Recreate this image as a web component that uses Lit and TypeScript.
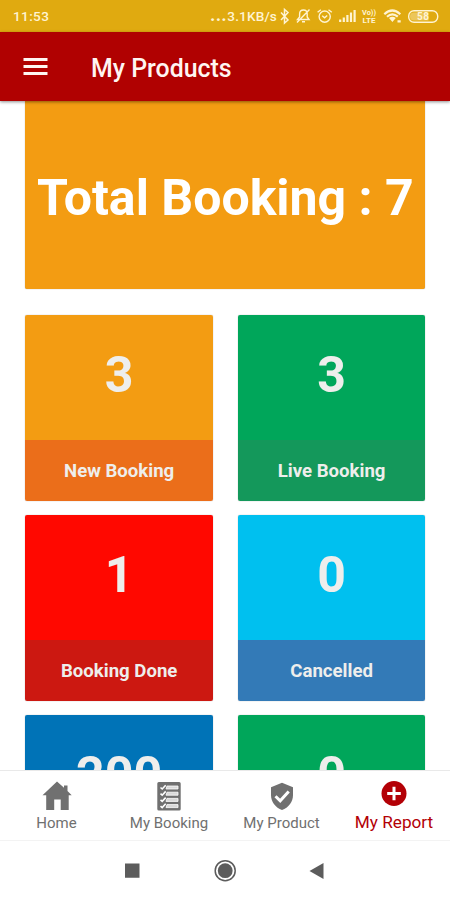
import { LitElement, html, css, svg } from "lit";
import { customElement, property } from "lit/decorators.js";
import { styleMap } from "lit/directives/style-map.js";

@customElement("status-bar")
class StatusBar extends LitElement {
  static styles = css`
    :host { display: flex; align-items: center; justify-content: space-between; box-sizing: border-box; height: 32px; padding: 0 11px 0 13px; background: #e0aa10; color: #fff4d2; font-size: 13.6px; font-weight: 500; line-height: 16px; }
    .time { letter-spacing: 0.35px; }
    .right { display: flex; align-items: center; }
    .rate { letter-spacing: 0.15px; white-space: nowrap; height: 16px; }
    .dots { letter-spacing: 0.8px; font-weight: 900; font-size: 16px; line-height: 1px; }
    svg { display: block; fill: none; stroke: currentColor; stroke-width: 1.4; }
    .net { font-size: 7px; font-weight: 700; stroke: none; fill: currentColor; }
    .level { font-size: 10px; font-weight: 700; stroke: none; fill: currentColor; }
  `;
  render() {
    return html`
      <span class="time">11:53</span>
      <div class="right">
        <span class="rate"><span class="dots">...</span>3.1KB/s</span>
        <svg width="162" height="20" viewBox="277 6 162 20">
          <path d="M281 12.500l7 7.500-3.500 3V9.500l3.500 3-7 7.500" stroke-width="1.500" />
          <path d="M297.500 19.500h11.500l-1.800-2.500v-3c0-2.600-1.500-4-3.700-4s-3.900 1.400-3.900 4v3zM302 21.700h3M309.500 9.500L297 22.500" />
          <circle cx="324.700" cy="16.600" r="5.600" /><path d="M322.200 15.800l2.400 2 2.600-2.300M317.600 12.300l3.300-2.600M331.800 12.300l-3.300-2.600" />
          <path d="M340.200 22v-2.500M343.800 22v-4.500M347.400 22v-7M351 22v-9.500M354.600 22v-12" stroke-width="2.200" />
          <text class="net" x="362" y="15.200" textLength="14" lengthAdjust="spacingAndGlyphs">Vo))</text>
          <text class="net" x="362.500" y="22.700" textLength="13" lengthAdjust="spacingAndGlyphs">LTE</text>
          <path d="M384.300 14.200Q392.300 6.800 400.300 14.200M387 16.700Q392.300 12 397.800 16.700" stroke-width="2.200" />
          <path d="M389 18.100Q392.300 15.400 395.800 18.100L392.400 22zM397.500 20.200h3.200v2.400h-3.200z" fill="currentColor" stroke="none" />
          <rect x="408.700" y="10.700" width="29" height="11.600" rx="5.400" />
          <path d="M414 12.500h14.500v8H414a4 4 0 010-8z" fill="currentColor" stroke="none" opacity=".38" />
          <text class="level" x="417" y="20" textLength="12">58</text>
        </svg>
      </div>
    `;
  }
}

@customElement("app-header")
class AppHeader extends LitElement {
  static styles = css`
    :host { display: flex; align-items: center; box-sizing: border-box; height: 69px; padding-left: 23px; background: #b00101; color: #fff5f2; box-shadow: 0 1px 3px rgba(0, 0, 0, 0.45); z-index: 2; }
    svg { display: block; fill: currentColor; }
    .title { margin: 5px 0 0 43px; font-size: 24.9px; font-weight: 500; line-height: 30px; white-space: nowrap; }
  `;
  render() {
    return html`
      <svg width="25" height="18" viewBox="0 0 25 18"><path d="M.5 0h24v3H.5zM.5 7h24v3H.5zM.5 14h24v3H.5z" /></svg>
      <div class="title">My Products</div>
    `;
  }
}

@customElement("count-card")
class CountCard extends LitElement {
  @property() count = "";
  @property() label = "";
  @property() top = "";
  @property() bottom = "";
  static styles = css`
    .card { height: 186.5px; border-radius: 2px; overflow: hidden; box-shadow: 0 0 1px rgba(0, 0, 0, 0.45); color: #eeeeec; font-weight: 700; text-align: center; }
    .count { height: 125px; line-height: 120px; font-size: 50px; box-sizing: border-box; }
    .label { height: 61.5px; line-height: 62px; font-size: 18.6px; }
  `;
  render() {
    return html`
      <div class="card">
        <div class="count" style=${styleMap({ background: this.top })}>${this.count}</div>
        <div class="label" style=${styleMap({ background: this.bottom })}>${this.label}</div>
      </div>
    `;
  }
}

const icons = {
  home: svg`<path d="M15 .500L.500 14.200h3.700V29h8V18.500h6.500V29h8V14.200h3L25.500 10V4.500H22v2.300z" />`,
  list: svg`<path d="M4.800 1h20.400a1.500 1.500 0 011.500 1.500v25.500a1.500 1.500 0 01-1.500 1.500H4.800a1.500 1.500 0 01-1.500-1.500V2.500A1.500 1.500 0 014.800 1z" /><path class="rows" d="M13 5h11v3H12zM13 11.200h11v3H12zM13 17.400h11v3H12zM13 23.600h11v3H12z" /><path class="line" d="M6.500 6.500l1.700 1.500 3.500-3.800M6.500 12.700l1.700 1.500 3.500-3.800M6.500 18.900l1.700 1.500 3.500-3.800M6.500 25.100l1.700 1.500 3.500-3.800" />`,
  shield: svg`<path d="M15 1.700L26 6.200v7.900c0 7-4.600 12.800-11 14.800-6.400-2-11-7.800-11-14.800V6.200z" /><path class="check" d="M8.500 15.200l4.700 4.600 8.500-9.400" />`,
  plus: svg`<circle cx="15" cy="12.500" r="12.500" /><path class="check" d="M15 5.700v13.600M8.200 12.500h13.600" />`,
};

@customElement("tab-bar")
class TabBar extends LitElement {
  static styles = css`
    :host { display: grid; grid-template-columns: repeat(4, 112.5px); box-sizing: border-box; height: 71px; border-top: 1px solid #e9e9e9; border-bottom: 1px solid #f3f3f3; background: #fff; z-index: 2; }
    .tab { display: flex; flex-direction: column; align-items: center; padding: 10px 0 0 0.5px; color: #707070; font-size: 15px; }
    .text { line-height: 20px; margin-top: 2px; white-space: nowrap; }
    .active { color: #b30006; }
    .active .text { font-size: 17.2px; margin-top: 1px; }
    svg { display: block; width: 30px; height: 30px; fill: currentColor; }
    .rows { fill: #d9d9d9; stroke: #fff; stroke-width: 0.8; }
    .line { fill: none; stroke: #fff; stroke-width: 1.6; }
    .check { fill: none; stroke: #fff; stroke-width: 3; }
  `;
  render() {
    const tabs = [["Home", icons.home], ["My Booking", icons.list], ["My Product", icons.shield], ["My Report", icons.plus]];
    return tabs.map(([name, icon], i) => html`
      <div class="tab ${i === 3 ? "active" : ""}">
        <svg viewBox="0 0 30 30">${icon}</svg>
        <span class="text">${name}</span>
      </div>`);
  }
}

@customElement("app-root")
class AppRoot extends LitElement {
  static styles = css`
    :host { display: flex; flex-direction: column; width: 450px; height: 900px; overflow: hidden; background: #fff; font-family: Roboto, "Liberation Sans", sans-serif; }
    .content { flex: 1; min-height: 0; overflow: hidden; padding: 0 24.6px 0 25.4px; }
    .total { height: 188.4px; line-height: 195px; background: #f39c12; color: #fff; font-size: 50px; font-weight: 700; text-align: center; white-space: nowrap; border-radius: 0 0 2px 2px; box-shadow: 0 0 1px rgba(0, 0, 0, 0.45); }
    .cards { display: grid; grid-template-columns: 187.5px 187.5px; column-gap: 25px; row-gap: 13.5px; margin-top: 25.4px; }
    .system { display: flex; justify-content: center; height: 59px; background: #fff; }
    .system svg { display: block; fill: #5c5c5c; }
  `;
  render() {
    const cards = [
      ["3", "New Booking", "#f39c12", "#eb6e1a"],
      ["3", "Live Booking", "#00a65a", "#14985b"],
      ["1", "Booking Done", "#ff0800", "#cc1811"],
      ["0", "Cancelled", "#00c0ef", "#337ab7"],
      ["200", "", "#0073b7", "#005c92"],
      ["0", "", "#00a65a", "#14985b"],
    ];
    return html`
      <status-bar></status-bar>
      <app-header></app-header>
      <div class="content">
        <div class="total">Total Booking : 7</div>
        <div class="cards">
          ${cards.map(([count, label, top, bottom]) => html`<count-card .count=${count} .label=${label} .top=${top} .bottom=${bottom}></count-card>`)}
        </div>
      </div>
      <tab-bar></tab-bar>
      <div class="system">
        <svg width="450" height="59" viewBox="0 841 450 59">
          <path d="M125 863.500h14.500v14.300H125zM323.500 863v16L309.500 871z" />
          <circle cx="225.200" cy="870.700" r="7.400" />
          <circle cx="225.200" cy="870.700" r="10" fill="none" stroke="#5c5c5c" stroke-width="1.500" />
        </svg>
      </div>
    `;
  }
}
